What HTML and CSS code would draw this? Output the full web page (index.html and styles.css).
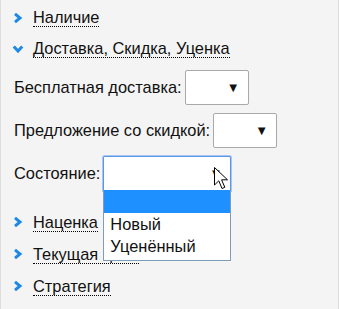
FILE: index.html
```html
<!DOCTYPE html>
<html lang="ru">
<head>
    <meta charset="UTF-8">
    <title>Фильтры</title>
    <link rel="stylesheet" href="styles.css">
</head>
<body>
    <div class="panel">
        <div class="nav-item">
            <svg class="chevron" width="10" height="12" viewBox="0 0 10 12"><path d="M2 1.8 L7 6 L2 10.2" /></svg>
            <span class="nav-title">Наличие</span>
        </div>
        <div class="nav-item">
            <svg class="chevron" width="12" height="10" viewBox="0 0 12 10"><path d="M1.8 2.5 L6 7 L10.2 2.5" /></svg>
            <span class="nav-title">Доставка, Скидка, Уценка</span>
        </div>

        <div class="form">
            <div class="form-row">
                <label>Бесплатная доставка:</label>
                <div class="select small"><span class="arrow">▼</span></div>
            </div>
            <div class="form-row">
                <label>Предложение со скидкой:</label>
                <div class="select small"><span class="arrow">▼</span></div>
            </div>
            <div class="form-row">
                <label>Состояние:</label>
                <div class="select-wrap">
                    <div class="select wide open"><span class="arrow">▼</span></div>
                    <ul class="dropdown">
                        <li class="selected">&nbsp;</li>
                        <li>Новый</li>
                        <li>Уценённый</li>
                    </ul>
                    <svg class="cursor" width="16" height="24" viewBox="0 0 16 24">
                        <path d="M0.5 0.5 L0.5 18 L4.8 13.8 L8 21.5 L10.8 20.3 L7.6 12.8 L13.5 12.8 Z" />
                    </svg>
                </div>
            </div>
        </div>

        <div class="nav-item">
            <svg class="chevron" width="10" height="12" viewBox="0 0 10 12"><path d="M2 1.8 L7 6 L2 10.2" /></svg>
            <span class="nav-title">Наценка</span>
        </div>
        <div class="nav-item">
            <svg class="chevron" width="10" height="12" viewBox="0 0 10 12"><path d="M2 1.8 L7 6 L2 10.2" /></svg>
            <span class="nav-title">Текущая цена</span>
        </div>
        <div class="nav-item">
            <svg class="chevron" width="10" height="12" viewBox="0 0 10 12"><path d="M2 1.8 L7 6 L2 10.2" /></svg>
            <span class="nav-title">Стратегия</span>
        </div>
    </div>
</body>
</html>
```

FILE: styles.css
```css
body {
    margin: 0;
    padding: 0;
    font-family: "Liberation Sans", Arial, sans-serif;
    font-size: 16.4px;
    color: #111;
    background-color: #fff;
}

.panel {
    width: 339px;
    height: 309px;
    padding-top: 2px;
    box-sizing: border-box;
    background-color: #f4f4f4;
    border-left: 1px solid #dcdcdc;
    border-right: 1px solid #dcdcdc;
}

.nav-item {
    display: flex;
    align-items: center;
    height: 31px;
    padding-left: 11px;
}

.form ~ .nav-item {
    height: 32px;
}

.chevron {
    width: 12px;
    flex: none;
}

.chevron path {
    fill: none;
    stroke: #1e88e5;
    stroke-width: 3;
}

.nav-title {
    margin-left: 9px;
    line-height: 18px;
    border-bottom: 1px dotted #000;
}

.form {
    padding: 6px 0 15px 13px;
}

.form-row {
    display: flex;
    align-items: center;
    margin-bottom: 8px;
}

.form-row:last-child {
    margin-bottom: 0;
}

.form-row label {
    margin-right: 3px;
}

.select {
    display: flex;
    justify-content: flex-end;
    align-items: center;
    height: 35px;
    box-sizing: border-box;
    padding-right: 8px;
    background-color: #fff;
    border: 1px solid #a9a9a9;
    border-radius: 2px;
}

.select.small {
    width: 64px;
}

.select.wide {
    width: 128px;
}

.select.open {
    border: 1px solid #5b95e8;
    box-shadow: 0 0 0 1px #a8c6f2;
    border-bottom-color: #000;
    border-radius: 2px 2px 0 0;
}

.arrow {
    font-size: 13px;
}

.select-wrap {
    position: relative;
}

.dropdown {
    position: absolute;
    top: 34px;
    left: 0;
    width: 128px;
    box-sizing: border-box;
    margin: 0;
    padding: 0 0 3px;
    list-style: none;
    background-color: #fff;
    border: 1px solid #7f9db9;
    border-top: none;
    z-index: 2;
}

.dropdown li {
    padding-left: 6px;
    line-height: 22px;
}

.dropdown li.selected {
    height: 23px;
    background-color: #1e90ff;
}

.cursor {
    position: absolute;
    top: 11px;
    left: 111px;
    z-index: 3;
}

.cursor path {
    fill: #fff;
    stroke: #000;
    stroke-width: 1;
}
```
